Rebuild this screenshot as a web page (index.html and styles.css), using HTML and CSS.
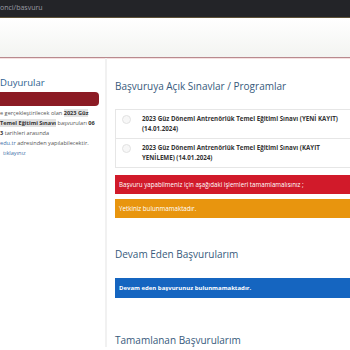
FILE: index.html
```html
<html>
<head>
    <meta charset="utf-8">
    <link rel="stylesheet" href="styles.css">
</head>
<body>
    <div id="urlBar">onci/basvuru</div>
    <div id="header"></div>

    <div id="page">
        <div id="sideCol">
            <div class="sideTitle">Duyurular</div>
            <div class="sideBand"></div>
            <div class="sideText">
                <div class="sideLine">e gerçekleştirilecek olan <b class="mark">2023 Güz</b></div>
                <div class="sideLine"><b class="mark">Temel Eğitimi Sınavı</b> başvuruları <b>06</b></div>
                <div class="sideLine"><b>3</b> tarihleri arasında</div>
                <div class="sideLine"><span class="link">edu.tr</span> adresinden yapılabilecektir.</div>
                <div class="sideLine indent"><span class="link">tıklayınız</span></div>
            </div>
        </div>

        <div id="mainCol">
            <h2 class="sectionTitle first">Başvuruya Açık Sınavlar / Programlar</h2>

            <div class="examList">
                <div class="examRow">
                    <span class="radio"></span>
                    <span class="examName">2023 Güz Dönemi Antrenörlük Temel Eğitimi Sınavı (YENİ KAYIT)<br>(14.01.2024)</span>
                </div>
                <div class="examRow">
                    <span class="radio"></span>
                    <span class="examName">2023 Güz Dönemi Antrenörlük Temel Eğitimi Sınavı (KAYIT<br>YENİLEME) (14.01.2024)</span>
                </div>
            </div>

            <div class="alert alertRed">Başvuru yapabilmeniz için aşağıdaki işlemleri tamamlamalısınız ;</div>
            <div class="alert alertOrange">Yetkiniz bulunmamaktadır.</div>

            <h2 class="sectionTitle">Devam Eden Başvurularım</h2>
            <div class="alert alertBlue">Devam eden başvurunuz bulunmamaktadır.</div>

            <h2 class="sectionTitle last">Tamamlanan Başvurularım</h2>
        </div>
    </div>
</body>
</html>
```

FILE: styles.css
```css
html, body {
    margin: 0;
    padding: 0;
    overflow: hidden;
    background-color: #ffffff;
    font-family: "Open Sans", "DejaVu Sans", sans-serif;
}

#urlBar {
    height: 17px;
    line-height: 16px;
    background-color: #232428;
    color: #9a9ca4;
    font-size: 7px;
    border-bottom: 1px solid #5e5238;
    white-space: nowrap;
}

#header {
    height: 39px;
    background: linear-gradient(#ffffff, #f3f4f1);
    border-bottom: 1px solid #b98a8e;
    box-shadow: 0 1px 0 #f6e0e0;
}

#page {
    display: flex;
    width: 480px;
}

#sideCol {
    width: 105px;
    flex-shrink: 0;
    overflow: hidden;
    padding-top: 18px;
}

.sideTitle {
    color: #2d5f8f;
    font-size: 9.5px;
    line-height: 13px;
}

.sideBand {
    height: 14px;
    width: 99px;
    margin-top: 3px;
    background-color: #8b1b24;
    border-radius: 0 4px 4px 0;
}

.sideText {
    margin-top: 2px;
    font-size: 5.6px;
    color: #555555;
    line-height: 10px;
}

.sideLine {
    white-space: nowrap;
}

.sideLine.indent {
    padding-left: 3px;
}

.mark {
    background-color: #e2e2e2;
    color: #333333;
}

.sideText b {
    color: #333333;
}

.link {
    color: #3d6fa8;
}

#mainCol {
    flex: 1;
    border-left: 2px solid #f1f1f1;
    padding: 0 0 0 8px;
}

.sectionTitle {
    margin: 0;
    font-weight: normal;
    font-size: 10px;
    line-height: 14px;
    color: #375a7c;
}

.sectionTitle.first {
    margin-top: 21px;
}

.examList {
    margin-top: 16px;
    border: 1px solid #e6e6e6;
}

.examRow {
    display: flex;
    align-items: flex-start;
    padding: 5px 0 5px 6px;
    height: 18px;
}

.examRow + .examRow {
    border-top: 1px solid #e6e6e6;
}

.radio {
    width: 7px;
    height: 7px;
    border: 1px solid #e2e2e2;
    border-radius: 50%;
    background-color: #f7f7f7;
    margin-top: 0;
    flex-shrink: 0;
}

.examName {
    margin-left: 11px;
    font-size: 6.2px;
    font-weight: bold;
    line-height: 10px;
    color: #333333;
    margin-top: -1px;
}

.alert {
    height: 19px;
    line-height: 19px;
    padding-left: 4px;
    font-size: 6.2px;
    color: #ffffff;
}

.alertRed {
    margin-top: 7px;
    background-color: #d11a2a;
}

.alertOrange {
    margin-top: 5px;
    background-color: #e8950e;
}

.alertBlue {
    margin-top: 17px;
    height: 20px;
    line-height: 20px;
    background-color: #1565c0;
    font-weight: bold;
    font-size: 6px;
}

.alertOrange + .sectionTitle {
    margin-top: 29px;
}

.sectionTitle.last {
    margin-top: 35px;
}
```
